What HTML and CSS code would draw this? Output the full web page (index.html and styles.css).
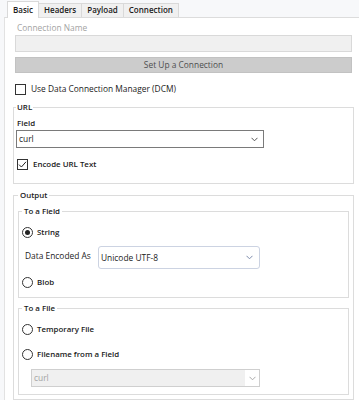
FILE: index.html
```html
<!DOCTYPE html>
<html lang="en">
<head>
    <meta charset="UTF-8">
    <meta name="viewport" content="width=device-width, initial-scale=1.0">
    <link rel="stylesheet" href="styles.css">
</head>
<body>
    <div class="tabs">
        <div class="tab active">Basic</div>
        <div class="tab">Headers</div>
        <div class="tab">Payload</div>
        <div class="tab">Connection</div>
    </div>

    <div class="panel">
        <div class="muted-label">Connection Name</div>
        <div class="text-input disabled"></div>
        <div class="button disabled">Set Up a Connection</div>

        <div class="check-row dcm">
            <span class="box"></span>
            <span>Use Data Connection Manager (DCM)</span>
        </div>

        <fieldset class="group url-group">
            <legend>URL</legend>
            <div class="field-label">Field</div>
            <div class="select">
                <span>curl</span>
                <svg class="chevron" width="7" height="5" viewBox="0 0 7 5"><polyline points="0.5,0.8 3.5,3.8 6.5,0.8" fill="none" stroke="#555" stroke-width="1"/></svg>
            </div>
            <div class="check-row strong encode">
                <span class="box">
                    <svg width="9" height="9" viewBox="0 0 9 9"><polyline points="1,4.6 3.4,7 8,1.8" fill="none" stroke="#222" stroke-width="1"/></svg>
                </span>
                <span>Encode URL Text</span>
            </div>
        </fieldset>

        <fieldset class="group output-group">
            <legend>Output</legend>

            <fieldset class="group inner field-group">
                <legend>To a Field</legend>
                <div class="radio-row"><span class="radio checked"></span>String</div>
                <div class="encode-row">
                    <span class="encode-label">Data Encoded As</span>
                    <div class="combo">
                        <span>Unicode UTF-8</span>
                        <svg class="chevron" width="7" height="5" viewBox="0 0 7 5"><polyline points="0.5,0.8 3.5,3.8 6.5,0.8" fill="none" stroke="#7d8bab" stroke-width="1"/></svg>
                    </div>
                </div>
                <div class="radio-row blob"><span class="radio"></span>Blob</div>
            </fieldset>

            <fieldset class="group inner file-group">
                <legend>To a File</legend>
                <div class="radio-row"><span class="radio"></span>Temporary File</div>
                <div class="radio-row filename"><span class="radio"></span>Filename from a Field</div>
                <div class="select disabled">
                    <span>curl</span>
                    <span class="drop">
                        <svg class="chevron" width="7" height="5" viewBox="0 0 7 5"><polyline points="0.5,0.8 3.5,3.8 6.5,0.8" fill="none" stroke="#aaa" stroke-width="1"/></svg>
                    </span>
                </div>
            </fieldset>
        </fieldset>
    </div>
</body>
</html>
```

FILE: styles.css
```css
* {
    box-sizing: border-box;
}
body {
    margin: 0;
    font-family: "Open Sans", sans-serif;
    font-size: 8.4px;
    line-height: 12px;
    color: #1b1b1b;
    background-color: #f7f8fa;
}
/* Tab strip */
.tabs {
    display: flex;
    align-items: flex-end;
    height: 17px;
    padding-left: 7px;
}
.tab {
    height: 14px;
    line-height: 12px;
    padding: 0 5px;
    margin-right: -1px;
    background-color: #f0f0f0;
    border: 1px solid #d9d9d9;
    border-bottom: none;
    font-size: 8px;
    font-weight: 600;
}
.tab.active {
    height: 17px;
    margin-bottom: -1px;
    line-height: 15px;
    background-color: #fff;
    position: relative;
    z-index: 1;
}
.panel {
    margin-left: 4px;
    min-height: 383px;
    padding: 4px 7px 0 10px;
    background-color: #fff;
    border-top: 1px solid #dcdcdc;
    border-left: 1px solid #e2e2e2;
}
.muted-label {
    color: #a3a3a3;
    padding-left: 2px;
}
.text-input {
    height: 17px;
    margin-top: 1px;
    border: 1px solid #d9d9d9;
    background-color: #f0f0f0;
}
.button {
    height: 16px;
    margin-top: 5px;
    line-height: 14px;
    text-align: center;
    color: #4e4e4e;
    background-color: #cccccc;
    border: 1px solid #c2c2c2;
}
/* Check boxes and radios */
.check-row,
.radio-row {
    display: flex;
    align-items: center;
    height: 12px;
}
.check-row.dcm {
    margin-top: 10px;
}
.box {
    width: 11px;
    height: 11px;
    margin-right: 5px;
    border: 1px solid #333;
    background-color: #fff;
    display: flex;
    align-items: center;
    justify-content: center;
}
.strong,
.radio-row,
legend,
.field-label {
    font-size: 7.9px;
    font-weight: 600;
}
.radio {
    width: 11px;
    height: 11px;
    margin-right: 4px;
    border: 1px solid #333;
    border-radius: 50%;
    background-color: #fff;
    display: flex;
    align-items: center;
    justify-content: center;
}
.radio.checked::after {
    content: "";
    width: 5px;
    height: 5px;
    border-radius: 50%;
    background-color: #222;
}
/* Group boxes */
.group {
    margin: 0 -2px;
    padding: 4px 2px 13px 2px;
    border: 1px solid #dcdcdc;
    min-width: 0;
}
.group legend {
    padding: 0 1px;
    line-height: 12px;
}
.url-group {
    margin-top: 6px;
}
.field-label {
    padding-left: 1px;
}
.select {
    display: flex;
    align-items: center;
    justify-content: space-between;
    width: 248px;
    height: 18px;
    margin-top: 1px;
    padding: 0 5px 0 2px;
    border: 1px solid #7a7a7a;
    background-color: #fff;
}
.check-row.encode {
    margin-top: 10px;
    padding-left: 1px;
}
.output-group {
    margin-top: 5px;
    padding: 4px 4px 4px 4px;
}
.output-group legend {
    padding: 0 2px;
}
.inner {
    margin: 0;
    padding: 9px 2px 9px 3px;
}
.inner legend {
    padding: 0 2px;
}
.encode-row {
    display: flex;
    align-items: center;
    margin-top: 8px;
}
.encode-label {
    width: 76px;
    padding-left: 3px;
    margin-top: -3px;
}
.combo {
    display: flex;
    align-items: center;
    justify-content: space-between;
    width: 162px;
    height: 23px;
    padding: 0 6px 0 2px;
    border: 1px solid #ccd3e2;
    border-radius: 3px;
    background-color: #fff;
}
.radio-row.blob {
    margin-top: 7px;
}
.file-group {
    margin-top: 4px;
    padding-bottom: 7px;
}
.radio-row.filename {
    margin-top: 13px;
}
.select.disabled {
    width: 229px;
    margin-top: 9px;
    margin-left: 9px;
    padding: 0 0 0 2px;
    color: #a3a3a3;
    background-color: #f0f0f0;
    border-color: #cfcfcf;
}
.select .drop {
    display: flex;
    align-items: center;
    justify-content: center;
    width: 14px;
    height: 100%;
    background-color: #fff;
}
```
